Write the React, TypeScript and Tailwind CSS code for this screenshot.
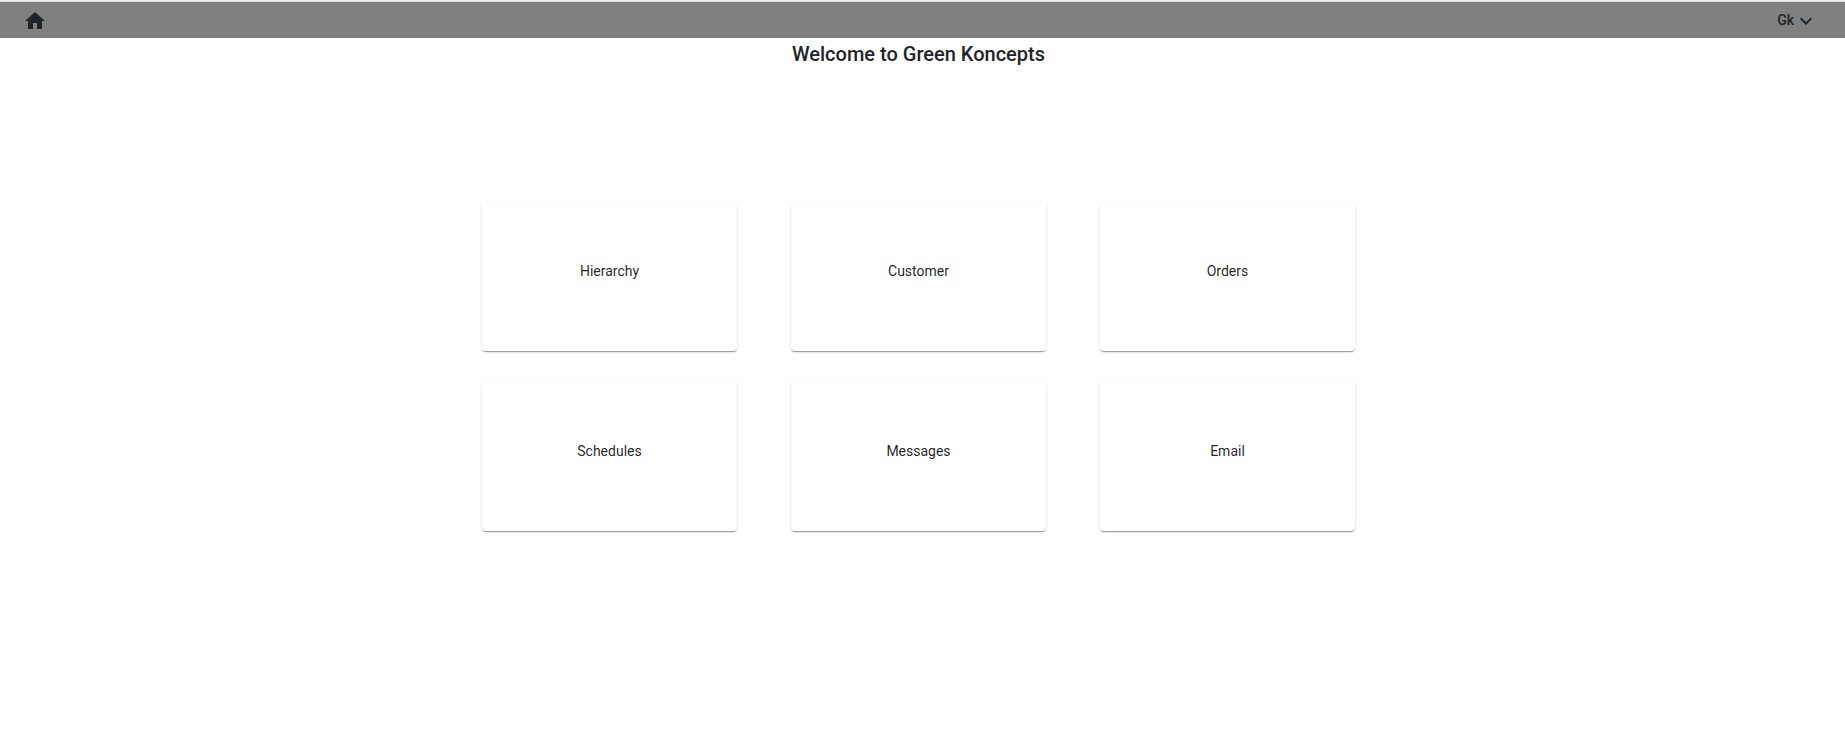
import React from 'react';
import { MdHome, MdExpandMore } from 'react-icons/md';

const items = ['Hierarchy', 'Customer', 'Orders', 'Schedules', 'Messages', 'Email'];

export default function App() {
  return (
    <div className="min-h-[755px] border-t border-[#e8eaed] bg-white font-['Roboto',sans-serif] text-[#212529]">
      <header className="flex h-[37px] items-center justify-between border-t border-[#dadce0] bg-[#808080] pl-[23px] pr-[27px]">
        <MdHome size={24} className="mt-px" />
        <button className="flex items-center text-sm font-medium">
          Gk
          <MdExpandMore size={24} className="mt-px" />
        </button>
      </header>
      <h1 className="mr-2 h-8 text-center text-xl leading-8 font-medium">Welcome to Green Koncepts</h1>
      <main className="ml-[482px] mt-[131px] grid w-[873px] grid-cols-3 gap-x-[54px] gap-y-[30px]">
        {items.map((name) => (
          <section
            key={name}
            className="flex h-[150px] items-center justify-center rounded-[4px] bg-white pb-2.5 text-sm text-black/87 shadow-[0_2px_1px_-1px_rgba(0,0,0,0.24),0_1px_1px_0_rgba(0,0,0,0.16),0_1px_3px_0_rgba(0,0,0,0.12)]"
          >
            {name}
          </section>
        ))}
      </main>
    </div>
  );
}
